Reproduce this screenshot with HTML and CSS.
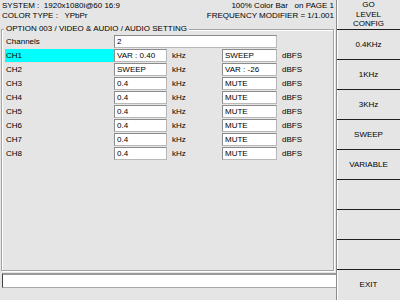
FILE: index.html
```html
<!DOCTYPE html>
<html>
<head>
<meta charset="utf-8">
<link rel="stylesheet" href="styles.css">
</head>
<body>
<div class="screen">
  <div class="main">
    <div class="header">
      <div class="hleft">
        <div class="hl">SYSTEM :  1920x1080i@60 16:9</div>
        <div class="hl">COLOR TYPE :   YPbPr</div>
      </div>
      <div class="hright">
        <div class="hl">100% Color Bar   on PAGE 1</div>
        <div class="hl">FREQUENCY MODIFIER = 1/1.001</div>
      </div>
    </div>
    <fieldset class="group">
      <legend>OPTION 003 / VIDEO &amp; AUDIO / AUDIO SETTING</legend>
      <div class="grid">
        <div class="lbl">Channels</div>
        <div class="field wide">2</div>

        <div class="lbl sel">CH1</div>
        <div class="field">VAR : 0.40</div><div class="unit">kHz</div>
        <div class="field">SWEEP</div><div class="unit">dBFS</div>

        <div class="lbl">CH2</div>
        <div class="field">SWEEP</div><div class="unit">kHz</div>
        <div class="field">VAR : -26</div><div class="unit">dBFS</div>

        <div class="lbl">CH3</div>
        <div class="field">0.4</div><div class="unit">kHz</div>
        <div class="field">MUTE</div><div class="unit">dBFS</div>

        <div class="lbl">CH4</div>
        <div class="field">0.4</div><div class="unit">kHz</div>
        <div class="field">MUTE</div><div class="unit">dBFS</div>

        <div class="lbl">CH5</div>
        <div class="field">0.4</div><div class="unit">kHz</div>
        <div class="field">MUTE</div><div class="unit">dBFS</div>

        <div class="lbl">CH6</div>
        <div class="field">0.4</div><div class="unit">kHz</div>
        <div class="field">MUTE</div><div class="unit">dBFS</div>

        <div class="lbl">CH7</div>
        <div class="field">0.4</div><div class="unit">kHz</div>
        <div class="field">MUTE</div><div class="unit">dBFS</div>

        <div class="lbl">CH8</div>
        <div class="field">0.4</div><div class="unit">kHz</div>
        <div class="field">MUTE</div><div class="unit">dBFS</div>
      </div>
    </fieldset>
    <div class="status"></div>
  </div>
  <div class="side">
    <div class="btn multi">GO<br>LEVEL<br>CONFIG</div>
    <div class="btn">0.4KHz</div>
    <div class="btn">1KHz</div>
    <div class="btn">3KHz</div>
    <div class="btn">SWEEP</div>
    <div class="btn">VARIABLE</div>
    <div class="btn"></div>
    <div class="btn"></div>
    <div class="btn"></div>
    <div class="btn last">EXIT</div>
  </div>
</div>
</body>
</html>
```

FILE: styles.css
```css
html, body {
  margin: 0;
  padding: 0;
  background: #e5e5e5;
}
body {
  font-family: "Liberation Sans", Arial, sans-serif;
  font-size: 8px;
  color: #000;
}
.screen {
  width: 400px;
  height: 300px;
  display: grid;
  grid-template-columns: 336px 64px;
}
.main {
  display: flex;
  flex-direction: column;
  height: 300px;
}
.header {
  height: 22px;
  flex: none;
  box-sizing: border-box;
  padding: 1px 2px 0 2px;
  line-height: 10px;
  display: flex;
  justify-content: space-between;
}
.hl {
  white-space: pre;
}
.hright {
  text-align: right;
}
.group {
  flex: 1;
  min-width: 0;
  margin: 2px 0 0 1px;
  width: 333px;
  box-sizing: border-box;
  padding: 1px 2px 0 3px;
  border: 1px solid #a4a4a4;
  box-shadow: inset 1px 1px 0 #fff, 1px 1px 0 #fff;
}
.group legend {
  padding: 0 2px;
  margin-left: -1px;
  line-height: 10px;
  background: #e5e5e5;
}
.grid {
  display: grid;
  grid-template-columns: 109px 53px 55px 55px 1fr;
  grid-auto-rows: 14px;
}
.lbl {
  grid-column: 1;
  padding-left: 1px;
  line-height: 13px;
  height: 13px;
}
.lbl.sel {
  background: #00ffff;
  border-bottom: 1px solid #f2d4d4;
}
.field {
  height: 13px;
  box-sizing: border-box;
  background: #fff;
  border: 1px solid;
  border-color: #8c8c8c #b8b8b8 #b8b8b8 #8c8c8c;
  padding-left: 2px;
  line-height: 11px;
}
.field.wide {
  grid-column: 2 / 5;
}
.unit {
  padding-left: 5px;
  line-height: 13px;
}
.status {
  height: 15px;
  flex: none;
  margin: 2px 0 12px 2px;
  box-sizing: border-box;
  background: #fff;
  border-top: 2px solid #9a9a9a;
  border-left: 1px solid #404040;
  border-bottom: 1px solid #a8a8a8;
}
.side {
  display: flex;
  flex-direction: column;
  border-left: 1px solid #8a8a8a;
  box-shadow: inset 1px 0 0 #fff;
}
.btn {
  height: 30px;
  flex: none;
  box-sizing: border-box;
  border-bottom: 1px solid #1e1e1e;
  display: flex;
  align-items: center;
  justify-content: center;
  text-align: center;
  line-height: 9.5px;
}
.btn.last {
  border-bottom: none;
}
```
